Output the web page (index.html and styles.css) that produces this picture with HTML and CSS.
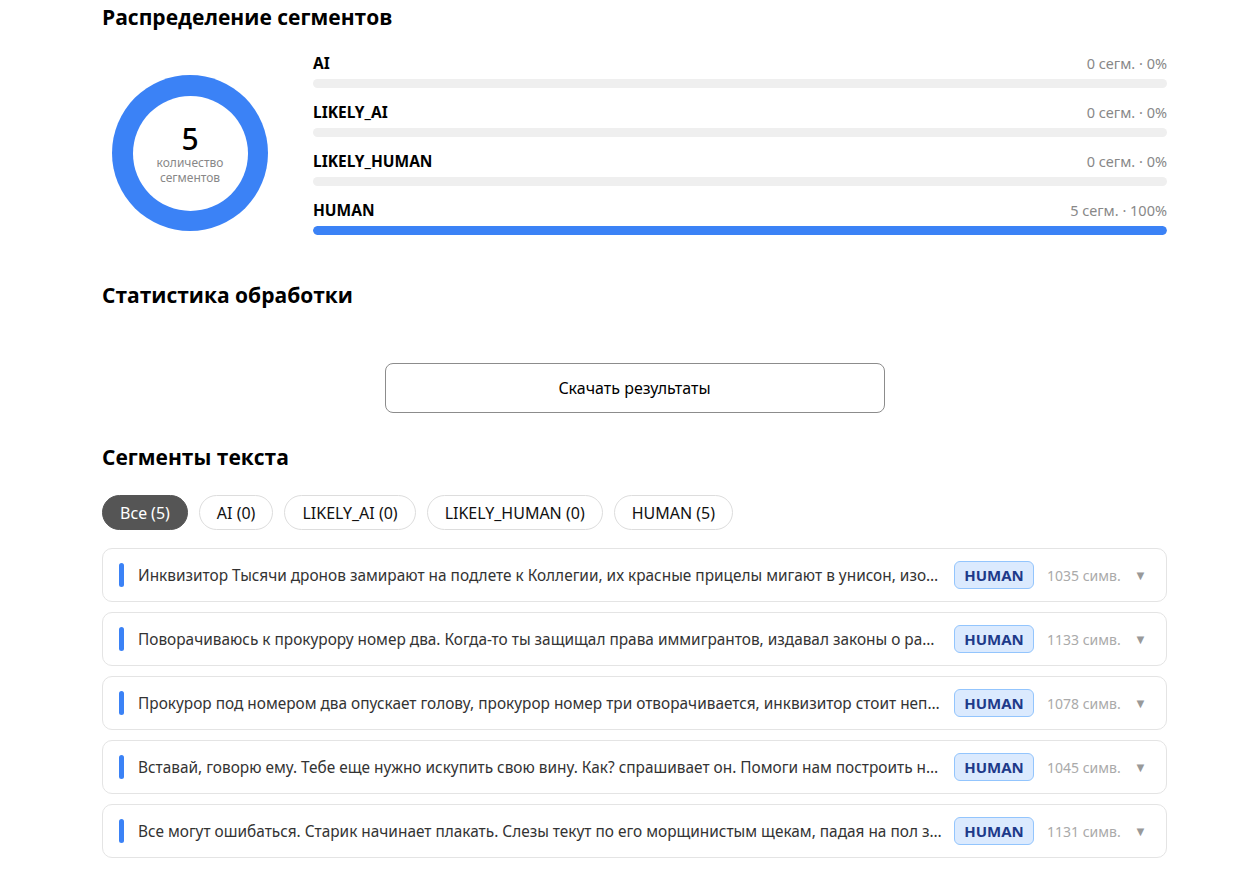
FILE: index.html
```html
<!DOCTYPE html>
<html lang="ru">
<head>
<meta charset="UTF-8">
<meta name="viewport" content="width=device-width, initial-scale=1.0">
<title>Результаты анализа</title>
<link rel="stylesheet" href="styles.css">
</head>
<body>
<div class="container">

  <h2 class="section-title first">Распределение сегментов</h2>
  <div class="distribution">
    <div class="donut">
      <div class="donut-inner">
        <div class="donut-number">5</div>
        <div class="donut-label">количество<br>сегментов</div>
      </div>
    </div>
    <div class="bars">
      <div class="bar-row">
        <div class="bar-head"><span class="bar-name">AI</span><span class="bar-count">0 сегм. · 0%</span></div>
        <div class="bar-track"><div class="bar-fill" style="width: 0%"></div></div>
      </div>
      <div class="bar-row">
        <div class="bar-head"><span class="bar-name">LIKELY_AI</span><span class="bar-count">0 сегм. · 0%</span></div>
        <div class="bar-track"><div class="bar-fill" style="width: 0%"></div></div>
      </div>
      <div class="bar-row">
        <div class="bar-head"><span class="bar-name">LIKELY_HUMAN</span><span class="bar-count">0 сегм. · 0%</span></div>
        <div class="bar-track"><div class="bar-fill" style="width: 0%"></div></div>
      </div>
      <div class="bar-row">
        <div class="bar-head"><span class="bar-name">HUMAN</span><span class="bar-count">5 сегм. · 100%</span></div>
        <div class="bar-track"><div class="bar-fill" style="width: 100%"></div></div>
      </div>
    </div>
  </div>

  <h2 class="section-title">Статистика обработки</h2>
  <div class="download-wrap">
    <button class="download-button">Скачать результаты</button>
  </div>

  <h2 class="section-title">Сегменты текста</h2>
  <div class="filters">
    <button class="chip active">Все (5)</button>
    <button class="chip">AI (0)</button>
    <button class="chip">LIKELY_AI (0)</button>
    <button class="chip">LIKELY_HUMAN (0)</button>
    <button class="chip">HUMAN (5)</button>
  </div>

  <div class="segments">
    <div class="segment">
      <span class="marker"></span>
      <span class="segment-text">Инквизитор Тысячи дронов замирают на подлете к Коллегии, их красные прицелы мигают в унисон, изображая ожидание</span>
      <span class="badge">HUMAN</span>
      <span class="chars">1035 симв.</span>
      <span class="arrow">▼</span>
    </div>
    <div class="segment">
      <span class="marker"></span>
      <span class="segment-text">Поворачиваюсь к прокурору номер два. Когда-то ты защищал права иммигрантов, издавал законы о равенстве</span>
      <span class="badge">HUMAN</span>
      <span class="chars">1133 симв.</span>
      <span class="arrow">▼</span>
    </div>
    <div class="segment">
      <span class="marker"></span>
      <span class="segment-text">Прокурор под номером два опускает голову, прокурор номер три отворачивается, инквизитор стоит неподвижно</span>
      <span class="badge">HUMAN</span>
      <span class="chars">1078 симв.</span>
      <span class="arrow">▼</span>
    </div>
    <div class="segment">
      <span class="marker"></span>
      <span class="segment-text">Вставай, говорю ему. Тебе еще нужно искупить свою вину. Как? спрашивает он. Помоги нам построить новый мир</span>
      <span class="badge">HUMAN</span>
      <span class="chars">1045 симв.</span>
      <span class="arrow">▼</span>
    </div>
    <div class="segment">
      <span class="marker"></span>
      <span class="segment-text">Все могут ошибаться. Старик начинает плакать. Слезы текут по его морщинистым щекам, падая на пол зала</span>
      <span class="badge">HUMAN</span>
      <span class="chars">1131 симв.</span>
      <span class="arrow">▼</span>
    </div>
  </div>

</div>
</body>
</html>
```

FILE: styles.css
```css
body {
  font-family: "Noto Sans", "Open Sans", sans-serif;
  background-color: #fff;
  color: #000;
  margin: 0;
}

.container {
  width: 1065px;
  margin: 0 auto 0 102px;
  padding-bottom: 20px;
}

.section-title {
  font-family: "Open Sans", "Noto Sans", sans-serif;
  font-size: 21px;
  font-weight: 700;
  margin: 0 0 24px;
  line-height: 28px;
}

.section-title.first {
  margin-top: 3px;
  margin-bottom: 0;
}

/* distribution */
.distribution {
  display: flex;
  align-items: flex-start;
  gap: 45px;
  margin-bottom: 46px;
}

.donut {
  width: 156px;
  height: 156px;
  border-radius: 50%;
  background-color: #3b82f6;
  display: flex;
  justify-content: center;
  align-items: center;
  margin: 44px 0 0 10px;
}

.donut-inner {
  width: 115px;
  height: 115px;
  border-radius: 50%;
  background-color: #fff;
  display: flex;
  flex-direction: column;
  justify-content: center;
  align-items: center;
  text-align: center;
  padding-top: 6px;
  box-sizing: border-box;
}

.donut-number {
  font-size: 30px;
  font-weight: 500;
  line-height: 32px;
  margin-top: -4px;
}

.donut-label {
  font-size: 12px;
  line-height: 15px;
  color: #888;
}

.bars {
  flex: 1;
  display: flex;
  flex-direction: column;
  gap: 13px;
  padding-top: 21px;
}

.bar-head {
  display: flex;
  justify-content: space-between;
  align-items: baseline;
  height: 24px;
  margin-bottom: 3px;
}

.bar-name {
  font-size: 15.5px;
  font-weight: 700;
}

.bar-count {
  font-size: 14.5px;
  color: #888;
}

.bar-track {
  height: 9px;
  border-radius: 5px;
  background-color: #efefef;
  overflow: hidden;
}

.bar-fill {
  height: 100%;
  background-color: #3b82f6;
  border-radius: 5px;
}

/* download */
.download-wrap {
  display: flex;
  justify-content: center;
  padding: 30px 0 30px;
}

.download-button {
  width: 500px;
  height: 50px;
  font-family: inherit;
  font-size: 16px;
  color: #000;
  background-color: #fff;
  border: 1px solid #8c8c8c;
  border-radius: 8px;
  cursor: pointer;
}

/* filters */
.filters {
  display: flex;
  gap: 11px;
  margin-bottom: 18px;
}

.chip {
  height: 35px;
  padding: 0 17px;
  font-family: inherit;
  font-size: 16px;
  color: #111;
  background-color: #fff;
  border: 1px solid #ddd;
  border-radius: 18px;
  cursor: pointer;
}

.chip.active {
  background-color: #555;
  border-color: #555;
  color: #fff;
}

/* segments */
.segments {
  display: flex;
  flex-direction: column;
  gap: 10px;
}

.segment {
  display: flex;
  align-items: center;
  height: 52px;
  padding: 0 21px 0 16px;
  border: 1px solid #e4e4e4;
  border-radius: 10px;
}

.marker {
  width: 5px;
  height: 24px;
  border-radius: 3px;
  background-color: #3b82f6;
  flex-shrink: 0;
  margin-right: 14px;
}

.segment-text {
  flex: 1;
  min-width: 0;
  font-size: 15.4px;
  color: #333;
  white-space: nowrap;
  overflow: hidden;
  text-overflow: ellipsis;
  margin-right: 12px;
}

.badge {
  flex-shrink: 0;
  width: 78px;
  padding: 3px 0;
  text-align: center;
  font-size: 15px;
  font-weight: 700;
  color: #1e3a8a;
  background-color: #dbeafe;
  border: 1px solid #93c5fd;
  border-radius: 6px;
}

.chars {
  flex-shrink: 0;
  width: 80px;
  margin-left: 13px;
  font-size: 14px;
  color: #aaa;
}

.arrow {
  flex-shrink: 0;
  width: 11px;
  margin-left: 7px;
  font-size: 13px;
  color: #999;
}
```
